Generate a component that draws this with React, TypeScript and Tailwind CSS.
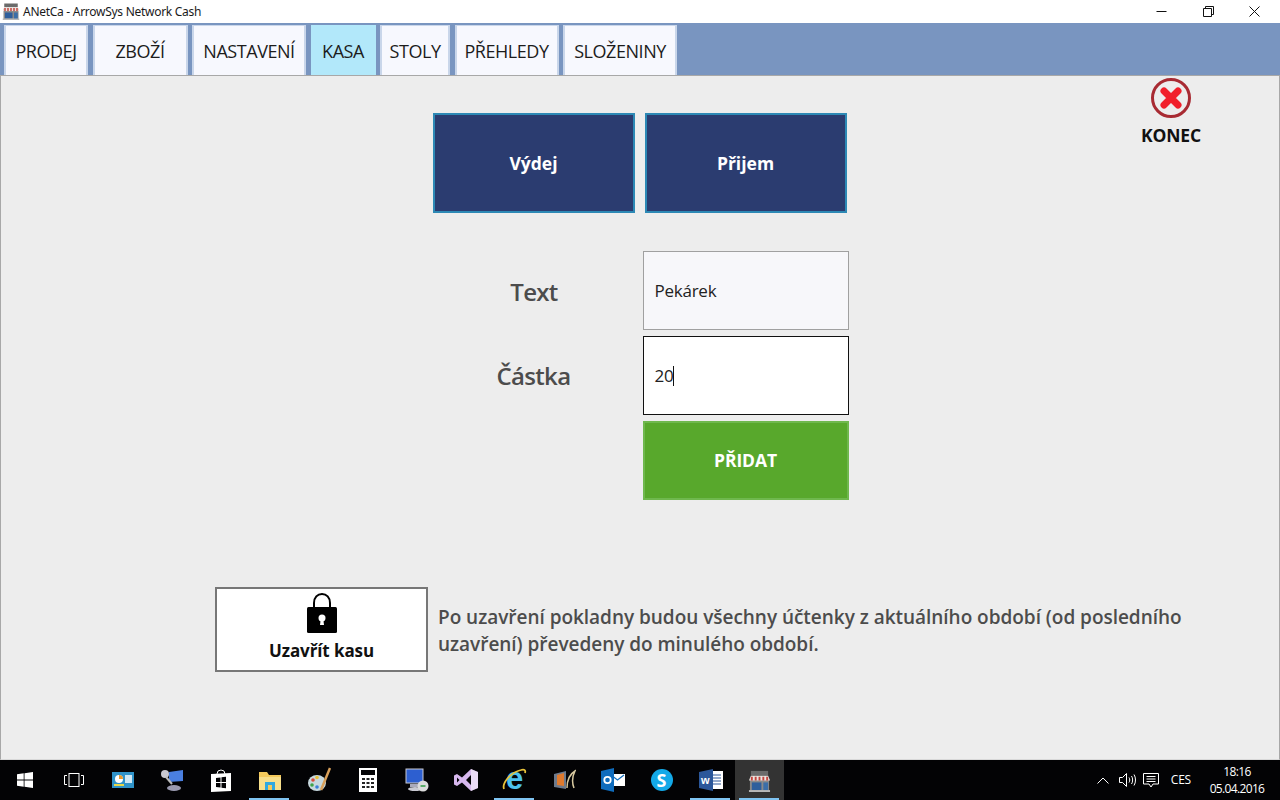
import React from "react";

function ShopIcon({ size = 18 }: { size?: number }) {
  return (
    <svg width={size} height={size} viewBox="0 0 24 24">
      <rect x="2" y="9" width="20" height="14" fill="#8a8a8a" />
      <rect x="3" y="2" width="18" height="5" fill="#6b6b6b" />
      <path d="M3 7h18l2 5H1z" fill="#e9e4e0" />
      <path d="M3 8h2v4H3zM7 8h2v4H7zM11 8h2v4h-2zM15 8h2v4h-2zM19 8h2v4h-2z" fill="#c4453f" />
      <rect x="4" y="14" width="10" height="8" fill="#2f5f9c" />
      <rect x="16" y="14" width="5" height="9" fill="#3b6ea8" />
      <rect x="1" y="22" width="22" height="2" fill="#b8b8b8" />
    </svg>
  );
}

const tabs = [
  { label: "PRODEJ", w: "w-[84px]" },
  { label: "ZBOŽÍ", w: "w-[95px]" },
  { label: "NASTAVENÍ", w: "w-[114px]" },
  { label: "KASA", w: "w-[65px]", active: true },
  { label: "STOLY", w: "w-[70px]" },
  { label: "PŘEHLEDY", w: "w-[104px]" },
  { label: "SLOŽENINY", w: "w-[114px]" },
];

function TaskSlot({ children, line, active }: { children: React.ReactNode; line?: boolean; active?: boolean }) {
  return (
    <div className={`relative w-[49px] h-10 flex items-center justify-center shrink-0 ${active ? "bg-[#333333]" : ""}`}>
      {children}
      {line && <div className="absolute bottom-0 left-[4px] right-[5px] h-[2px] bg-[#7fc4f2]" />}
    </div>
  );
}

export default function App() {
  return (
    <div className="w-[1280px] h-[800px] overflow-hidden flex flex-col bg-[#ededed] font-['Open_Sans','Noto_Sans',sans-serif]">
      {/* Title bar */}
      <div className="h-[23px] bg-white flex items-center shrink-0">
        <div className="ml-[2px] w-[18px] h-[18px] mt-[-2px]"><ShopIcon /></div>
        <span className="ml-[3px] mt-[1px] text-[12px] leading-none text-[#1a1a1a] font-['Noto_Sans',sans-serif] tracking-[-0.28px]">ANetCa - ArrowSys Network Cash</span>
        <div className="ml-auto flex items-center">
          <svg width="11" height="11" viewBox="0 0 11 11" className="mr-[36px]"><path d="M0.5 5.500h10" stroke="#111" strokeWidth="1" /></svg>
          <svg width="11" height="11" viewBox="0 0 11 11" className="mr-[35px]"><path d="M0.5 2.500h8v8h-8zM2.500 2.500v-2h8v8h-2" fill="none" stroke="#111" strokeWidth="1" /></svg>
          <svg width="11" height="11" viewBox="0 0 11 11" className="mr-[20px]"><path d="M0.5 0.500l10 10M10.500 0.500l-10 10" stroke="#111" strokeWidth="1" /></svg>
        </div>
      </div>

      {/* Tab bar */}
      <div className="h-[52px] bg-[#7995c0] flex items-end pl-[4px] gap-[4.5px] shrink-0">
        {tabs.map((t) => (
          <div
            key={t.label}
            className={`${t.w} h-[50px] pt-[1px] flex items-center justify-center text-[18px] text-[#1c1c1c] border-l-2 border-r-2 border-t ${
              t.active ? "bg-[#b2e8fa] border-[#b2e8fa]" : "bg-[#f7f8fe] border-[#c9d6ea]"
            } tracking-[-0.45px]`}
          >
            {t.label}
          </div>
        ))}
      </div>

      {/* Main */}
      <div className="relative flex-1 flex flex-col items-center border border-[#a8a8a8] border-b-[#d8d8d8] bg-[#ededed]">
        <div className="absolute right-[68px] top-[1px] w-[80px] flex flex-col items-center">
          <svg width="42" height="42" viewBox="0 0 42 42">
            <circle cx="21" cy="21" r="18.500" fill="#ededed" stroke="#a82b33" strokeWidth="3" />
            <path d="M14 14l14 14M28 14l-14 14" stroke="#f11f2b" strokeWidth="7" strokeLinecap="round" />
          </svg>
          <span className="mt-[5px] text-[17.5px] font-bold leading-[22px] text-[#111] tracking-[-0.1px]">KONEC</span>
        </div>

        <div className="mt-[37px] flex gap-[10px] ml-[-1px]">
          {["Výdej", "Přijem"].map((l) => (
            <div key={l} className="w-[202px] h-[100px] flex items-center justify-center bg-[#2b3c70] border-2 border-[#2d89b5] text-white font-bold text-[17.5px]">
              {l}
            </div>
          ))}
        </div>

        <div className="mt-[38px] grid grid-cols-[206px_206px] gap-x-[4px] gap-y-[6px] ml-[-1px] mr-[-2px]">
          <div className="h-[79px] flex items-center justify-center pr-[3px] pt-[2px] text-[24px] font-semibold text-[#4c4c4c] tracking-[-0.7px]">Text</div>
          <div className="h-[79px] flex items-center pl-[11px] bg-[#f7f7fa] border border-[#a0a0a0] text-[17px] text-[#222] tracking-[-0.25px]">Pekárek</div>
          <div className="h-[79px] flex items-center justify-center pr-[4px] pt-[1px] text-[24px] font-semibold text-[#4c4c4c] tracking-[-0.7px]">Částka</div>
          <div className="h-[79px] flex items-center pl-[11px] bg-white border border-[#111] text-[17px] text-[#222] tracking-[-0.25px]">
            20<span className="inline-block w-px h-[20px] bg-[#111]" />
          </div>
          <div />
          <div className="h-[79px] flex items-center justify-center bg-[#58a82c] border-2 border-[#6fb84e] text-white font-bold text-[17.5px] tracking-[-0.1px]">PŘIDAT</div>
        </div>

        <div className="mt-[87px] self-start ml-[214px] flex items-center">
          <div className="w-[213px] h-[85px] bg-white border-2 border-[#777] flex flex-col items-center pt-[3px]">
            <svg width="32" height="42" viewBox="0 0 32 42">
              <path d="M8 20V11C8 5.500 11.500 2 16 2s8 3.500 8 9v9" fill="none" stroke="#000" strokeWidth="2" />
              <rect x="1" y="15" width="30" height="26" rx="1.500" fill="#000" />
              <circle cx="16" cy="26" r="3.500" fill="#fff" />
              <path d="M14.700 27h2.600l.7 6h-4z" fill="#fff" />
            </svg>
            <span className="mt-[6px] text-[17px] font-bold leading-[22px] text-[#111] tracking-[-0.1px]">Uzavřít kasu</span>
          </div>
          <p className="ml-[10px] mt-[2px] w-[770px] text-[19px] leading-[27px] font-semibold text-[#4c4c4c] tracking-[-0.03px]">
            Po uzavření pokladny budou všechny účtenky z aktuálního období (od posledního uzavření) převedeny do minulého období.
          </p>
        </div>
      </div>

      {/* Taskbar */}
      <div className="h-10 bg-[#030305] flex items-center shrink-0 text-white">
        <TaskSlot>
          <svg width="16" height="16" viewBox="0 0 16 16"><path d="M0 2.300l6.700-1v6.300H0zM7.500 1.200L16 0v7.600H7.500zM0 8.400h6.700v6.300l-6.700-1zM7.500 8.400H16V16l-8.500-1.200z" fill="#fff" /></svg>
        </TaskSlot>
        <TaskSlot>
          <svg width="20" height="14" viewBox="0 0 20 14" fill="none" stroke="#fff" strokeWidth="1"><rect x="5" y="0.500" width="10" height="13" /><path d="M3 2.500H.5v9H3M17 2.500h2.500v9H17" /></svg>
        </TaskSlot>
        <TaskSlot>
          <svg width="22" height="16" viewBox="0 0 22 16"><rect width="22" height="16" fill="#2f93c9" /><circle cx="7" cy="7" r="4" fill="#fff" /><path d="M7 7V3a4 4 0 0 1 4 4z" fill="#e89a2e" /><rect x="13" y="3" width="7" height="8" fill="#cfe8f5" /><rect x="2" y="12" width="10" height="2" fill="#e8d94a" /></svg>
        </TaskSlot>
        <TaskSlot>
          <svg width="24" height="24" viewBox="0 0 24 24"><path d="M9 4l14-2v11l-14 1z" fill="#4a7fe0" /><circle cx="5" cy="6" r="4" fill="#c9c9d2" /><path d="M6 9l6 7" stroke="#bbb" strokeWidth="2" /><ellipse cx="14" cy="20" rx="7" ry="3" fill="#9a9ab0" /></svg>
        </TaskSlot>
        <TaskSlot>
          <svg width="22" height="24" viewBox="0 0 22 24"><path d="M7 6a4 4 0 0 1 8 0" fill="none" stroke="#fff" /><path d="M1 6l20-1v18l-20 1z" fill="#fff" /><path d="M6 10l4.500-.6v4.600H6zM11.500 9.300l4.500-.6V14h-4.500zM6 15h4.500v4.600L6 19zM11.500 15H16v5.300l-4.500-.6z" fill="#030305" /></svg>
        </TaskSlot>
        <TaskSlot line>
          <svg width="22" height="19" viewBox="0 0 22 19"><path d="M0 1h8l2 3h12v15H0z" fill="#f3c95b" /><path d="M0 6h22v13H0z" fill="#f7de8a" /><path d="M6 11h10v8H6z" fill="#2fa8e0" /><rect x="9" y="14" width="4" height="5" fill="#f3c95b" /></svg>
        </TaskSlot>
        <TaskSlot>
          <svg width="24" height="26" viewBox="0 0 24 26"><ellipse cx="10" cy="16" rx="9" ry="8" fill="#c7d8de" /><circle cx="6" cy="13" r="1.800" fill="#d94a3a" /><circle cx="10" cy="10.500" r="1.800" fill="#e8c23a" /><circle cx="5" cy="18" r="1.800" fill="#3fa24a" /><circle cx="10" cy="20" r="1.800" fill="#3a7fd9" /><path d="M23 1l-9 22" stroke="#d9a05a" strokeWidth="2.500" /></svg>
        </TaskSlot>
        <TaskSlot>
          <svg width="18" height="24" viewBox="0 0 18 24"><rect width="18" height="24" fill="#fff" /><rect x="2" y="2" width="14" height="5" fill="#030305" /><path d="M3 10h3v2H3zM7.500 10h3v2h-3zM12 10h3v2h-3zM3 14h3v2H3zM7.500 14h3v2h-3zM12 14h3v2h-3zM3 18h3v2H3zM7.500 18h3v2h-3zM12 18h3v2h-3z" fill="#222" /></svg>
        </TaskSlot>
        <TaskSlot>
          <svg width="24" height="24" viewBox="0 0 24 24"><rect x="1" y="1" width="17" height="14" fill="#2d5fd0" stroke="#c9c9d2" /><rect x="5" y="16" width="10" height="3" fill="#aab" /><ellipse cx="10" cy="21" rx="7" ry="2" fill="#c9c9d2" /><circle cx="18" cy="18" r="5.500" fill="#dcdcdc" /><path d="M15.500 18h5" stroke="#2f9e44" strokeWidth="1.500" /></svg>
        </TaskSlot>
        <TaskSlot>
          <svg width="24" height="22" viewBox="0 0 24 22"><path d="M17 0l7 3v16l-7 3-9-8.500L3 17l-3-1.500v-9L3 5l5 3.500zM17 6l-5 5 5 5zM3 8.500v5l2.500-2.500z" fill="#d7b8ee" fillRule="evenodd" /><path d="M17 0l7 3v16l-7 3z" fill="#fff" fillOpacity="0.5" /></svg>
        </TaskSlot>
        <TaskSlot line>
          <span className="text-[31px] leading-none font-bold text-[#4cc2ee] font-['Liberation_Sans',sans-serif] relative top-[-2px]">e</span>
          <svg width="26" height="26" viewBox="0 0 26 26" className="absolute left-[11px] top-[7px]"><path d="M3 22C1 17 8 6 20 3c3-1 5 0 4 3" fill="none" stroke="#e8c23a" strokeWidth="1.800" /></svg>
        </TaskSlot>
        <TaskSlot>
          <svg width="24" height="24" viewBox="0 0 24 24"><path d="M2 6l12-3v18L2 19z" fill="#6d7a8c" /><path d="M5 7l7-2v13l-7-1z" fill="#df7a2e" /><path d="M15 20C15 12 18 6 23 3c-3 6-3 12-1 17" fill="none" stroke="#d8c9a0" strokeWidth="1.500" /></svg>
        </TaskSlot>
        <TaskSlot>
          <svg width="24" height="24" viewBox="0 0 24 24"><rect x="9" y="6" width="15" height="12" fill="#fff" /><path d="M10 7l6.500 5L23 7" fill="none" stroke="#0f6cbd" strokeWidth="1.200" /><path d="M0 3l13-3v24L0 21z" fill="#0f6cbd" /><circle cx="6.500" cy="12" r="3.200" fill="none" stroke="#fff" strokeWidth="1.800" /></svg>
        </TaskSlot>
        <TaskSlot>
          <div className="w-[22px] h-[22px] rounded-full bg-[#13a9e8] flex items-center justify-center text-white font-bold text-[18px] leading-none">S</div>
        </TaskSlot>
        <TaskSlot line>
          <svg width="24" height="22" viewBox="0 0 24 22"><rect x="10" y="2" width="14" height="18" fill="#fff" /><path d="M14 6h8M14 9h8M14 12h8M14 15h8" stroke="#2b579a" /><path d="M0 3l14-3v22L0 19z" fill="#2b579a" /><text x="2" y="15" fontSize="11" fontWeight="700" fill="#fff" fontFamily="Liberation Sans">w</text></svg>
        </TaskSlot>
        <TaskSlot active line>
          <ShopIcon size={23} />
        </TaskSlot>

        <div className="ml-auto flex items-center h-full">
          <svg width="12" height="7" viewBox="0 0 12 7" className="mr-[10px]"><path d="M.5 6.500L6 1l5.500 5.500" fill="none" stroke="#fff" /></svg>
          <svg width="17" height="14" viewBox="0 0 17 14" fill="none" stroke="#fff" className="mr-[7px]"><path d="M.5 4.500h3L7.500.5v13l-4-4h-3zM10 4.500c1 1.500 1 3.500 0 5M12.500 3c1.500 2 1.500 6 0 8M15 1.500c2 3 2 8 0 11" /></svg>
          <svg width="16" height="16" viewBox="0 0 16 16" fill="none" stroke="#fff" className="mr-[12px]"><path d="M.5 1.500h15v10.500h-5.500l-2 3-2-3H.5zM3.500 4.500h9M3.500 7h9M3.500 9.500h9" /></svg>
          <span className="text-[12px] tracking-[-0.2px]">CES</span>
          <div className="w-[56px] ml-[18px] mr-[15px] flex flex-col items-center text-[12px] leading-[17px] tracking-[-0.65px]">
            <span>18:16</span>
            <span>05.04.2016</span>
          </div>
        </div>
      </div>
    </div>
  );
}
